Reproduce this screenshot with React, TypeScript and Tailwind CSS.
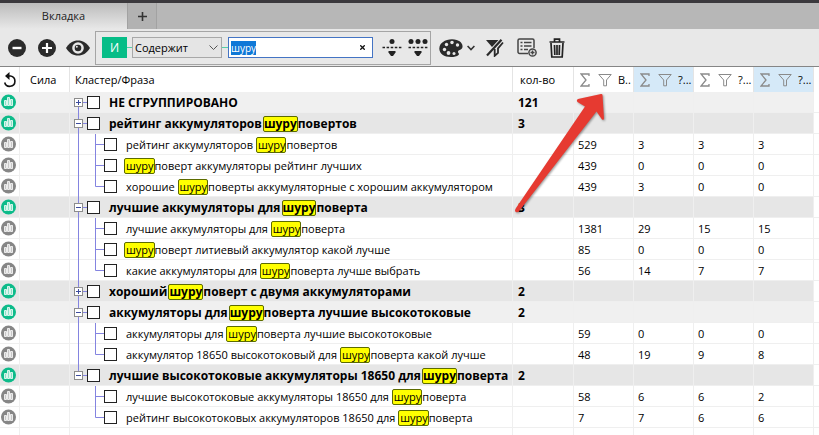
import React, { FunctionComponent, useEffect, useRef, useState } from 'react'
import clsx from 'clsx'

interface RowData {
    level: 0 | 1
    text: string
    count?: string
    values?: string[]
    expanded?: boolean
    light?: boolean
    last?: boolean
}

const rows: RowData[] = [
    { level: 0, text: 'НЕ СГРУППИРОВАНО', count: '121', expanded: false, light: true },
    { level: 0, text: 'рейтинг аккумуляторов шуруповертов', count: '3', expanded: true },
    { level: 1, text: 'рейтинг аккумуляторов шуруповертов', values: ['529', '3', '3', '3'] },
    { level: 1, text: 'шуруповерт аккумуляторы рейтинг лучших', values: ['439', '0', '0', '0'] },
    { level: 1, text: 'хорошие шуруповерты аккумуляторные с хорошим аккумулятором', values: ['439', '3', '0', '0'], last: true },
    { level: 0, text: 'лучшие аккумуляторы для шуруповерта', count: '3', expanded: true },
    { level: 1, text: 'лучшие аккумуляторы для шуруповерта', values: ['1381', '29', '15', '15'] },
    { level: 1, text: 'шуруповерт литиевый аккумулятор какой лучше', values: ['85', '0', '0', '0'] },
    { level: 1, text: 'какие аккумуляторы для шуруповерта лучше выбрать', values: ['56', '14', '7', '7'], last: true },
    { level: 0, text: 'хороший шуруповерт с двумя аккумуляторами', count: '2', expanded: false },
    { level: 0, text: 'аккумуляторы для шуруповерта лучшие высокотоковые', count: '2', expanded: true, light: true },
    { level: 1, text: 'аккумуляторы для шуруповерта лучшие высокотоковые', values: ['59', '0', '0', '0'] },
    { level: 1, text: 'аккумулятор 18650 высокотоковый для шуруповерта какой лучше', values: ['48', '19', '9', '8'], last: true },
    { level: 0, text: 'лучшие высокотоковые аккумуляторы 18650 для шуруповерта', count: '2', expanded: true },
    { level: 1, text: 'лучшие высокотоковые аккумуляторы 18650 для шуруповерта', values: ['58', '6', '6', '2'] },
    { level: 1, text: 'рейтинг высокотоковых аккумуляторов 18650 для шуруповерта', values: ['7', '7', '6', '6'], last: true },
]

const lastRoot = rows.map((r) => r.level).lastIndexOf(0)

const ChartIcon: FunctionComponent<{ active: boolean }> = ({ active }) => (
    <svg width="16" height="16" viewBox="0 0 16 16" className="ml-px">
        <circle cx="7.5" cy="8" r="7.5" fill={active ? '#0dbb8a' : '#868686'} />
        <path d="M3.5 6.5h2v5h-2zM6.5 3.5h2v8h-2zM9.5 5.5h2v6h-2z" fill={active ? '#8fe0c8' : '#c8c8c8'} stroke="#fff" strokeWidth="0.8" />
    </svg>
)

const SigmaIcon = () => (
    <svg width="10" height="14" viewBox="0 0 10 14" fill="none" stroke="#8a8a8a" strokeWidth="1.3">
        <path d="M9 3V1H1l5 6-5 6h8v-2" />
    </svg>
)

const FunnelIcon = () => (
    <svg width="14" height="14" viewBox="0 0 14 14" fill="none" stroke="#8a8a8a">
        <path d="M.8 1.5h12.4L8.5 7v5.8H5.7V7z" />
    </svg>
)

const TreeLines: FunctionComponent<{ row: RowData; index: number }> = ({ row, index }) => {
    if (row.level === 0) {
        return (
            <svg width="17" height="21" viewBox="0 0 17 21" fill="none" stroke="#8484e0" className="absolute left-0 top-0">
                {index > 0 && <path d="M8.5 0v6" />}
                {index < lastRoot && <path d="M8.5 15v6" />}
                <path d="M13 10.5h4" />
            </svg>
        )
    }
    return (
        <svg width="34" height="21" viewBox="0 0 34 21" fill="none" stroke="#8484e0" className="shrink-0">
            {index < lastRoot && <path d="M8.5 0v21" />}
            <path d={row.last ? 'M25.5 0v10.5H34' : 'M25.5 0v21M25.5 10.5H34'} />
        </svg>
    )
}

const Phrase: FunctionComponent<{ text: string; query: string; bold: boolean }> = ({ text, query, bold }) => {
    const at = query ? text.indexOf(query) : -1
    if (at < 0) {
        return <>{text}</>
    }
    return (
        <>
            {text.slice(0, at)}
            <mark
                className={clsx(
                    'inline-block h-4 rounded-[2px] border border-[#5c6b00] bg-[#ffff00] text-inherit leading-[14px]',
                    !bold && 'pl-px',
                    (bold || at === 0) && '-ml-[2px]'
                )}
            >
                {query}
            </mark>
            {text.slice(at + query.length)}
        </>
    )
}

const TableRow: FunctionComponent<{ row: RowData; index: number; query: string }> = ({ row, index, query }) => {
    const root = row.level === 0
    const bg = root ? (row.light ? 'bg-[#f0f0f0]' : 'bg-[#e6e6e6]') : 'bg-white'
    const cell = `h-[21px] border-r border-b border-[#efefef] p-0 ${bg}`
    const id = `row-${index}`

    return (
        <tr>
            <td className={cell}><ChartIcon active={root} /></td>
            <td className={cell} />
            <td className={cell}>
                <div className="relative -mb-px flex h-[21px] items-center">
                    <TreeLines row={row} index={index} />
                    {root && (
                        <button aria-label={row.expanded ? 'Свернуть' : 'Развернуть'} className="relative mx-1 size-[9px] shrink-0">
                            <svg width="9" height="9" viewBox="0 0 9 9" fill="none">
                                <rect x=".5" y=".5" width="8" height="8" fill="#fff" stroke="#8c8c8c" />
                                <path d={row.expanded ? 'M2 4.5h5' : 'M2 4.5h5M4.5 2v5'} stroke="#3c4c9c" />
                            </svg>
                        </button>
                    )}
                    <input id={id} type="checkbox" className="size-[13px] shrink-0 appearance-none border border-[#222] bg-white checked:bg-[#333]" />
                    <label htmlFor={id} className={clsx('ml-[9px] whitespace-pre text-black', root ? 'text-[12px] font-bold' : 'text-[11px]')}>
                        <Phrase text={row.text} query={query} bold={root} />
                    </label>
                </div>
            </td>
            <td className={`${cell} pl-[5px] pt-px text-[12px] font-bold`}>{row.count}</td>
            {[0, 1, 2, 3].map((i) => (
                <td key={i} className={`${cell} pl-1 pt-px text-[11px]`}>{row.values?.[i]}</td>
            ))}
            <td className="border-b border-[#efefef]" />
        </tr>
    )
}

const Toolbar: FunctionComponent<{ query: string; onQuery: (value: string) => void }> = ({ query, onQuery }) => {
    const input = useRef<HTMLInputElement>(null)

    useEffect(() => {
        input.current?.focus()
        input.current?.select()
    }, [])

    return (
        <div className="flex h-[38px] items-center border-b border-[#858585] bg-[#e8e8e8] pl-2">
            <button aria-label="Свернуть всё" className="mr-3">
                <svg width="18" height="18" viewBox="0 0 18 18"><circle cx="9" cy="9" r="9" fill="#2b2b2b" /><path d="M4.5 9h9" stroke="#fff" strokeWidth="2.4" /></svg>
            </button>
            <button aria-label="Развернуть всё" className="mr-[10px]">
                <svg width="18" height="18" viewBox="0 0 18 18"><circle cx="9" cy="9" r="9" fill="#2b2b2b" /><path d="M4 9h10M9 4v10" stroke="#fff" strokeWidth="2.2" /></svg>
            </button>
            <button aria-label="Показать" className="mr-[5px]">
                <svg width="24" height="16" viewBox="0 0 24 16">
                    <path d="M0 8C3 3 7 .5 12 .5S21 3 24 8c-3 5-7 7.5-12 7.5S3 13 0 8z" fill="#2b2b2b" />
                    <circle cx="12" cy="8" r="5.8" fill="#e8e8e8" /><circle cx="12" cy="8" r="3.3" fill="#2b2b2b" />
                    <circle cx="10.8" cy="6.8" r="1" fill="#e8e8e8" />
                </svg>
            </button>

            <div className="flex h-[34px] items-center border border-[#a5a5a5] pl-[6px] pr-[2px]">
                <button className="h-[21px] w-[25px] bg-[#06bd87] text-[12px] text-white">И</button>
                <span className="h-px w-[5px] bg-[#55cfa8]" />
                <div className="relative">
                    <select aria-label="Условие" className="h-[21px] w-[90px] appearance-none border border-[#a8a8a8] bg-[#e5e5e5] pl-[2px] text-[11px] leading-[18px]">
                        <option>Содержит</option>
                        <option>Не содержит</option>
                    </select>
                    <svg width="9" height="6" viewBox="0 0 9 6" fill="none" stroke="#555" className="pointer-events-none absolute right-1 top-2">
                        <path d="M.5.5l4 4 4-4" />
                    </svg>
                </div>
                <span className="h-px w-[6px] bg-[#55cfa8]" />
                <div className="relative">
                    <input
                        ref={input}
                        type="text"
                        aria-label="Фраза"
                        value={query}
                        onChange={(e) => onQuery(e.target.value)}
                        className="block h-[21px] w-[145px] border border-[#4474c4] bg-white pl-[2px] pr-4 text-[10px] leading-4 outline-none selection:bg-[#0f78d7] selection:text-white"
                    />
                    <button aria-label="Очистить" onClick={() => onQuery('')} className="absolute right-2 top-2">
                        <svg width="5" height="5" viewBox="0 0 5 5" stroke="#111" strokeWidth="1.3"><path d="M.3.3l4.4 4.4M4.7.3L.3 4.7" /></svg>
                    </button>
                </div>
                <button aria-label="Разделить фразу" className="ml-[9px]">
                    <svg width="20" height="17" viewBox="0 0 20 17" fill="#222">
                        <circle cx="10" cy="2.5" r="2.5" /><path d="M6.5 12h7v1.500L11 17H9l-2.500-3.500z" />
                        <path d="M.5 8.5h19" stroke="#222" strokeWidth="1.3" strokeDasharray="2.5 1.6" />
                    </svg>
                </button>
                <button aria-label="Разделить все" className="ml-[6px]">
                    <svg width="20" height="17" viewBox="0 0 20 17" fill="#222">
                        <circle cx="3" cy="2.5" r="2.5" /><circle cx="10" cy="2.5" r="2.5" /><circle cx="17" cy="2.5" r="2.5" />
                        <path d="M6.500 12h7v1.500L11 17H9l-2.500-3.500z" />
                        <path d="M.5 8.5h19" stroke="#222" strokeWidth="1.3" strokeDasharray="2.5 1.6" />
                    </svg>
                </button>
            </div>

            <button aria-label="Цвет" className="ml-2 flex items-center gap-1">
                <svg width="24" height="18" viewBox="0 0 24 18">
                    <path d="M13 .3C20 .3 24 4 23.5 8c-.4 3-4 2.5-4.5 4.5-.4 1.5 2 2 .5 3.5C18 17.5 15 18 12 18 5 18 .3 14.5.3 9.500.3 4 6 .3 13 .3z" fill="#2b2b2b" />
                    <g fill="#e8e8e8"><circle cx="13" cy="3.5" r="1.7" /><circle cx="7.5" cy="5.5" r="1.7" /><circle cx="18.5" cy="6" r="1.7" /><circle cx="5.5" cy="10.5" r="1.7" /><circle cx="9.5" cy="14" r="1.9" /><circle cx="15" cy="14.5" r="1.5" /></g>
                </svg>
                <svg width="8" height="6" viewBox="0 0 8 6" fill="none" stroke="#333" strokeWidth="1.6"><path d="M.6 1L4 4.5 7.4 1" /></svg>
            </button>
            <button aria-label="Сбросить фильтр" className="ml-[10px]">
                <svg width="19" height="18" viewBox="0 0 19 18" fill="none" stroke="#2b2b2b">
                    <path d="M1 1h12.5L7 8z" fill="#2b2b2b" stroke="none" />
                    <path d="M16.5.8L2 16.5" strokeWidth="2.2" />
                    <path d="M18 3.5l-5 5.8v4.500l-3.300 3V10" strokeWidth="1.8" />
                </svg>
            </button>
            <button aria-label="Добавить список" className="ml-[13px]">
                <svg width="20" height="19" viewBox="0 0 20 19" fill="none" stroke="#444" strokeWidth="1.5">
                    <path d="M11 15.5H2.5A1.5 1.5 0 011 14V2.5A1.5 1.5 0 012.5 1h13A1.5 1.5 0 0117 2.5V10" />
                    <path d="M3.5 4.5h2M7 4.5h7.500M3.5 8h2M7 8h7.500M3.5 11.5h2M7 11.5h4" />
                    <circle cx="15.5" cy="14.5" r="3.6" fill="#e8e8e8" /><path d="M13.5 14.5h4M15.5 12.5v4" />
                </svg>
            </button>
            <button aria-label="Удалить" className="ml-3">
                <svg width="16" height="20" viewBox="0 0 16 20" fill="none" stroke="#222" strokeWidth="1.7">
                    <path d="M.5 4h15M5.5 3.5V1.2h5v2.3M2 5l.8 14h10.4L14 5M5.5 7l.3 10M8 7v10M10.5 7l-.3 10" />
                </svg>
            </button>
        </div>
    )
}

export default function App() {
    const [query, setQuery] = useState('шуру')
    const head = 'h-[25px] border-r border-[#e4e4e4] p-0 text-left text-[11px] font-normal'
    const metrics = ['В..', '?...', '?...', '?...']

    return (
        <div className="relative min-h-screen overflow-hidden bg-white font-['Open_Sans','Noto_Sans',sans-serif] text-[11px] leading-4 text-black">
            <div className="flex h-[29px] border-t-[3px] border-[#3b393d] bg-[#b7b7b7]">
                <button className="w-[127px] bg-linear-to-b from-[#bcbcbc] to-[#e8e8e8] text-[#222]">Вкладка</button>
                <button aria-label="Новая вкладка" className="flex w-[30px] items-center justify-center border-x border-[#a2a2a2] bg-[#b2b2b2]">
                    <svg width="9" height="9" viewBox="0 0 9 9" stroke="#333" strokeWidth="1.6"><path d="M0 4.5h9M4.5 0v9" /></svg>
                </button>
            </div>
            <Toolbar query={query} onQuery={setQuery} />

            <table className="w-full table-fixed border-separate border-spacing-0">
                <colgroup>
                    <col className="w-5" />
                    <col className="w-[50px]" />
                    <col />
                    <col className="w-[61px]" />
                    <col className="w-[60px]" />
                    <col className="w-[60px]" />
                    <col className="w-[60px]" />
                    <col className="w-[60px]" />
                    <col className="w-[5px]" />
                </colgroup>
                <thead>
                    <tr>
                        <th className={head}>
                            <button aria-label="Обновить" className="block pl-[3px]">
                                <svg width="14" height="16" viewBox="0 0 14 16" fill="none" stroke="#111" strokeWidth="1.6">
                                    <path d="M5 4h2.5a5.2 5.2 0 11-5.8 6.5" /><path d="M6.5 0L2 4l4.5 4z" fill="#111" stroke="none" />
                                </svg>
                            </button>
                        </th>
                        <th className={`${head} pl-[10px]`}>Сила</th>
                        <th className={`${head} pl-[5px]`}>Кластер/Фраза</th>
                        <th className={`${head} pl-[7px]`}>кол-во</th>
                        {metrics.map((name, i) => (
                            <th key={i} className={`${head} ${i % 2 ? 'bg-[#d5e9f8]' : 'bg-white'}`}>
                                <div className="flex items-center whitespace-nowrap pl-[6px]">
                                    <SigmaIcon />
                                    <span className="ml-2"><FunnelIcon /></span>
                                    <span className="ml-[6px]">{name}</span>
                                </div>
                            </th>
                        ))}
                        <th />
                    </tr>
                </thead>
                <tbody>
                    {rows.map((row, i) => (
                        <TableRow key={i} row={row} index={i} query={query} />
                    ))}
                    <tr>
                        {[0, 1, 2, 3, 4, 5, 6, 7].map((i) => (
                            <td key={i} className="h-[7px] border-r border-[#efefef] p-0" />
                        ))}
                    </tr>
                </tbody>
            </table>

            {/* pointer to the first filter, sits over the fixed-width columns */}
            <svg width="100" height="124" viewBox="0 0 100 124" className="pointer-events-none absolute right-[209px] top-[92px] drop-shadow-[1px_1px_1px_rgba(0,0,0,0.4)]">
                <path d="M91 2L68 7q-2 1-.5 3l7.5 4.5L6 116q-2 3 0 4 2 1 4-2L86.5 19.5l5.5 8q2 1 2-1L92.5 3q-.3-1.3-1.5-1z" fill="#e63a31" />
            </svg>
        </div>
    )
}
